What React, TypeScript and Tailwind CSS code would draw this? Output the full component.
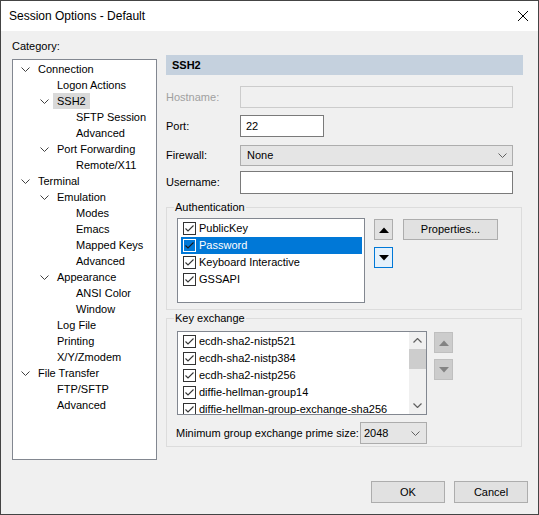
import React from 'react';

type TreeNode = { label: string; level: number; open?: boolean; selected?: boolean };

const TREE: TreeNode[] = [
  { label: 'Connection', level: 0, open: true },
  { label: 'Logon Actions', level: 1 },
  { label: 'SSH2', level: 1, open: true, selected: true },
  { label: 'SFTP Session', level: 2 },
  { label: 'Advanced', level: 2 },
  { label: 'Port Forwarding', level: 1, open: true },
  { label: 'Remote/X11', level: 2 },
  { label: 'Terminal', level: 0, open: true },
  { label: 'Emulation', level: 1, open: true },
  { label: 'Modes', level: 2 },
  { label: 'Emacs', level: 2 },
  { label: 'Mapped Keys', level: 2 },
  { label: 'Advanced', level: 2 },
  { label: 'Appearance', level: 1, open: true },
  { label: 'ANSI Color', level: 2 },
  { label: 'Window', level: 2 },
  { label: 'Log File', level: 1 },
  { label: 'Printing', level: 1 },
  { label: 'X/Y/Zmodem', level: 1 },
  { label: 'File Transfer', level: 0, open: true },
  { label: 'FTP/SFTP', level: 1 },
  { label: 'Advanced', level: 1 },
];

const INDENT = ['pl-[6px]', 'pl-[25px]', 'pl-[44px]'];

const AUTH = ['PublicKey', 'Password', 'Keyboard Interactive', 'GSSAPI'];
const KEX = [
  'ecdh-sha2-nistp521',
  'ecdh-sha2-nistp384',
  'ecdh-sha2-nistp256',
  'diffie-hellman-group14',
  'diffie-hellman-group-exchange-sha256',
];

function Chevron({ color = '#404040' }: { color?: string }) {
  return (
    <svg width="9" height="5" viewBox="0 0 9 5">
      <polyline points="0.5,0.5 4.5,4.5 8.5,0.5" fill="none" stroke={color} strokeWidth="1" />
    </svg>
  );
}

function Check({ inverted }: { inverted?: boolean }) {
  return (
    <span
      className={`ml-[2px] flex h-[13px] w-[13px] shrink-0 items-center justify-center border ${
        inverted ? 'border-white bg-[#0078d7]' : 'border-[#333333] bg-white'
      }`}
    >
      <svg width="11" height="11" viewBox="0 0 11 11">
        <polyline points="1.5,5.5 4,8 9.5,2.5" fill="none" stroke={inverted ? '#1a1a1a' : '#333333'} strokeWidth="1.1" />
      </svg>
    </span>
  );
}

function Triangle({ up, color }: { up?: boolean; color: string }) {
  return (
    <svg width="10" height="6" viewBox="0 0 10 6">
      <polygon points={up ? '0,6 5,0.5 10,6' : '0,0 5,5.5 10,0'} fill={color} />
    </svg>
  );
}

export default function App() {
  return (
    <div className="flex h-[515px] w-[539px] flex-col border border-[#444444] font-['Liberation_Sans',Arial,sans-serif] text-[11px] text-black">
      {/* Title bar */}
      <div className="flex h-[30px] shrink-0 items-center justify-between bg-white pl-[8px] pr-[10px]">
        <span className="text-[12px]">Session Options - Default</span>
        <svg width="10" height="10" viewBox="0 0 10 10">
          <path d="M0 0L10 10M10 0L0 10" stroke="#000" strokeWidth="1" />
        </svg>
      </div>

      <div className="flex flex-1 flex-col bg-[#f0f0f0]">
        <div className="flex items-start pl-[11px] pt-[7px]">
          {/* Category tree */}
          <div className="flex w-[145px] flex-col">
            <span className="leading-[16px]">Category:</span>
            <div className="mt-[5px] h-[401px] border border-[#828790] bg-white pt-[1px]">
              {TREE.map((n, i) => (
                <div key={i} className={`flex h-[16px] items-center ${INDENT[n.level]}`}>
                  <span className="flex h-full w-[15px] shrink-0 items-center">
                    {n.open && (
                      <span className="ml-[2px] flex">
                        <Chevron />
                      </span>
                    )}
                  </span>
                  <span className={`px-[4px] leading-[16px] ${n.selected ? 'bg-[#d9d9d9]' : ''}`}>{n.label}</span>
                </div>
              ))}
            </div>
          </div>

          {/* Right panel */}
          <div className="ml-[9px] mt-[17px] flex w-[357px] flex-col">
            <div className="h-[20px] bg-[#c5d1de] pl-[6px] font-bold leading-[20px]">SSH2</div>

            <div className="mt-[11px] flex items-center">
              <span className="w-[74px] text-[#a0a0a0]">Hostname:</span>
              <div className="h-[22px] w-[273px] border border-[#cccccc] bg-[#f0f0f0]" />
            </div>
            <div className="mt-[7px] flex items-center">
              <span className="w-[74px]">Port:</span>
              <div className="flex h-[22px] w-[84px] items-center border border-[#7a7a7a] bg-white pl-[5px]">22</div>
            </div>
            <div className="mt-[8px] flex items-center">
              <span className="w-[74px]">Firewall:</span>
              <div className="flex h-[21px] w-[273px] items-center justify-between border border-[#adadad] bg-[#e5e5e5] pl-[6px] pr-[5px]">
                <span>None</span>
                <Chevron color="#606060" />
              </div>
            </div>
            <div className="mt-[5px] flex items-center">
              <span className="w-[74px]">Username:</span>
              <div className="h-[23px] w-[273px] border border-[#7a7a7a] bg-white" />
            </div>

            {/* Authentication */}
            <fieldset className="mt-[5px] w-[356px] border border-[#dcdcdc] p-0">
              <legend className="ml-[7px] px-[1px] leading-[16px]">Authentication</legend>
              <div className="mt-[3px] flex items-start pb-[6px] pl-[10px]">
                <div className="h-[85px] w-[188px] border border-[#828790] bg-white pl-[3px] pr-[2px] pt-[1px]">
                  {AUTH.map((a, i) => {
                    const sel = a === 'Password';
                    return (
                      <div key={i} className={`flex h-[17px] items-center ${sel ? 'bg-[#0078d7] text-white' : ''}`}>
                        <Check inverted={sel} />
                        <span className="ml-[3px]">{a}</span>
                      </div>
                    );
                  })}
                </div>
                <div className="ml-[9px] flex flex-col">
                  <button className="mt-[1px] flex h-[21px] w-[19px] items-center justify-center border border-[#adadad] bg-[#e1e1e1]">
                    <Triangle up color="#000" />
                  </button>
                  <button className="mt-[7px] flex h-[21px] w-[19px] items-center justify-center border border-[#0078d7] bg-[#e5f1fb]">
                    <Triangle color="#000" />
                  </button>
                </div>
                <button className="ml-[10px] mt-[1px] h-[21px] w-[95px] border border-[#adadad] bg-[#e1e1e1]">Properties...</button>
              </div>
            </fieldset>

            {/* Key exchange */}
            <fieldset className="w-[356px] border border-[#dcdcdc] p-0">
              <legend className="ml-[7px] px-[1px] leading-[16px]">Key exchange</legend>
              <div className="mt-[5px] flex items-start pl-[10px]">
                <div className="flex h-[84px] w-[250px] border border-[#828790] bg-white">
                  <div className="flex-1 overflow-hidden whitespace-nowrap pl-[3px] pt-[1px]">
                    {KEX.map((k, i) => (
                      <div key={i} className="flex h-[17px] items-center">
                        <Check />
                        <span className="ml-[3px]">{k}</span>
                      </div>
                    ))}
                  </div>
                  <div className="flex w-[17px] flex-col bg-[#f0f0f0]">
                    <div className="flex h-[17px] items-center justify-center">
                      <svg width="9" height="5" viewBox="0 0 9 5">
                        <polyline points="0.5,4.5 4.5,0.5 8.5,4.5" fill="none" stroke="#606060" strokeWidth="1.2" />
                      </svg>
                    </div>
                    <div className="h-[20px] bg-[#cdcdcd]" />
                    <div className="flex-1" />
                    <div className="flex h-[17px] items-center justify-center">
                      <svg width="9" height="5" viewBox="0 0 9 5">
                        <polyline points="0.5,0.5 4.5,4.5 8.5,0.5" fill="none" stroke="#606060" strokeWidth="1.2" />
                      </svg>
                    </div>
                  </div>
                </div>
                <div className="ml-[7px] flex flex-col">
                  <div className="mt-[1px] flex h-[21px] w-[19px] items-center justify-center border border-[#bfbfbf] bg-[#cccccc]">
                    <Triangle up color="#838383" />
                  </div>
                  <div className="mt-[6px] flex h-[21px] w-[19px] items-center justify-center border border-[#bfbfbf] bg-[#cccccc]">
                    <Triangle color="#838383" />
                  </div>
                </div>
              </div>
              <div className="mt-[7px] flex items-center pb-[2px] pl-[9px]">
                <span className="w-[184px]">Minimum group exchange prime size:</span>
                <div className="flex h-[22px] w-[67px] items-center justify-between border border-[#acacac] bg-[#e5e5e5] pl-[3px] pr-[6px]">
                  <span>2048</span>
                  <Chevron color="#606060" />
                </div>
              </div>
            </fieldset>
          </div>
        </div>

        {/* Footer buttons */}
        <div className="mt-[21px] flex justify-end gap-[9px] pr-[10px]">
          <button className="h-[22px] w-[74px] border border-[#adadad] bg-[#e1e1e1]">OK</button>
          <button className="h-[22px] w-[74px] border border-[#adadad] bg-[#e1e1e1]">Cancel</button>
        </div>
      </div>
    </div>
  );
}
